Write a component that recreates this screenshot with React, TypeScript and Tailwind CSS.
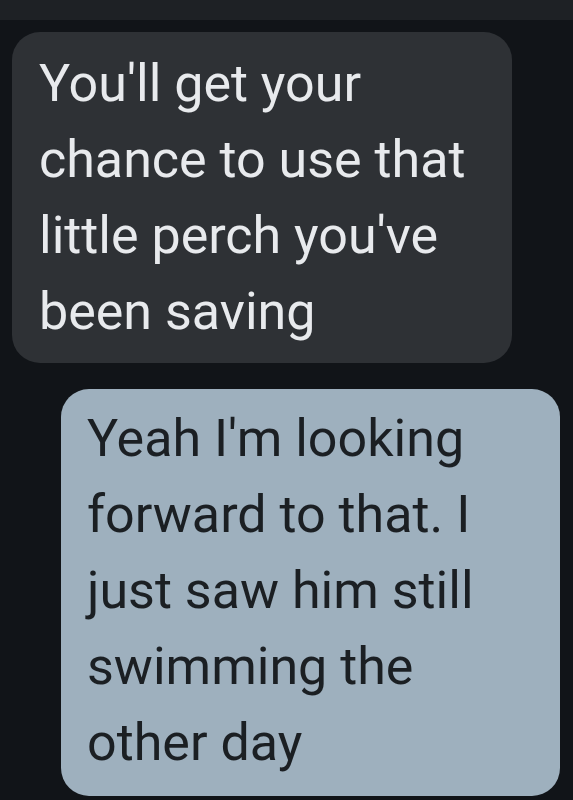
import React from "react";

const received = ["You'll get your", "chance to use that", "little perch you've", "been saving"];
const sent = ["Yeah I'm looking", "forward to that. I", "just saw him still", "swimming the", "other day"];

export default function App() {
  return (
    <div className="w-[573px] h-[800px] overflow-hidden bg-[#111418] font-['Roboto',sans-serif]">
      <div className="h-[20px] bg-[#1e2125]" />
      <div className="flex flex-col pt-[12px]">
        {/* incoming message */}
        <div className="ml-[12px] w-[500px] rounded-[28px] bg-[#2e3135] pl-[27px] pt-[14px] pb-[13px] text-[52px] leading-[76px] text-[#e8eaed]">
          {received.map((line, i) => (
            <div key={i} className="whitespace-nowrap">{line}</div>
          ))}
        </div>
        {/* outgoing message */}
        <div className="ml-[61px] mt-[26px] w-[499px] rounded-[28px] bg-[#9eb0be] pl-[26px] pt-[12px] pb-[15px] text-[52px] leading-[76px] text-[#1b1f23]">
          {sent.map((line, i) => (
            <div key={i} className="whitespace-nowrap">{line}</div>
          ))}
        </div>
      </div>
    </div>
  );
}
